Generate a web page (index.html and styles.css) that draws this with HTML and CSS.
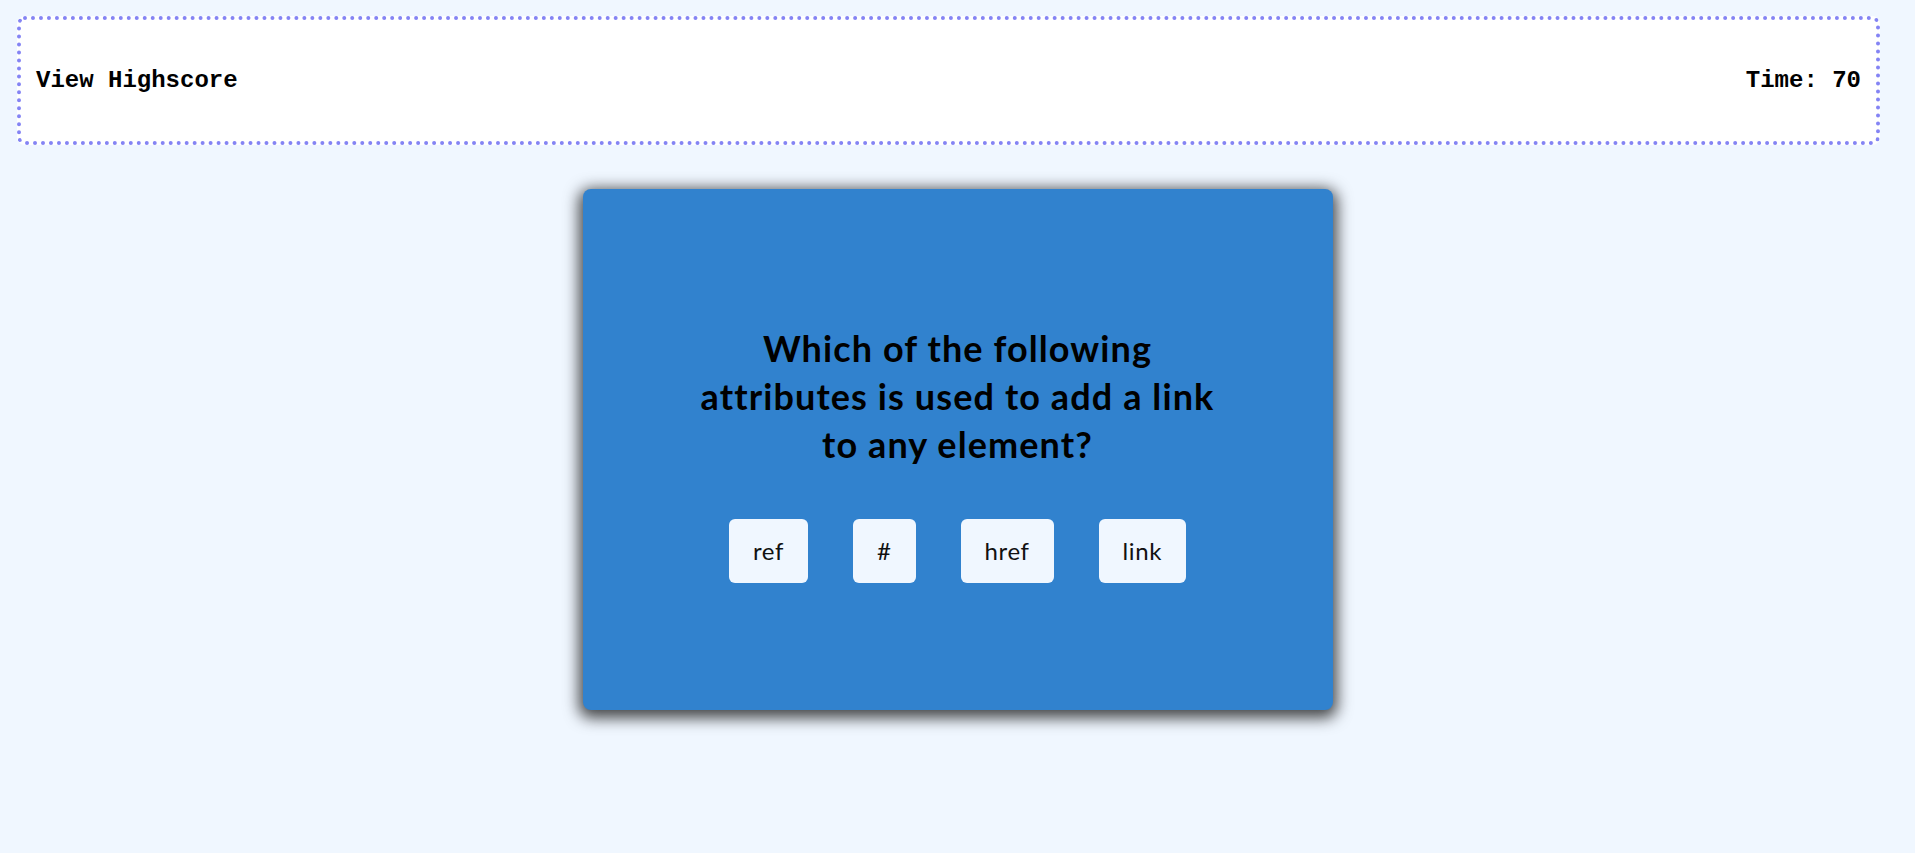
FILE: index.html
```html
<!DOCTYPE html>
<html lang="en">
<head>
<meta charset="utf-8">
<title>Code Quiz</title>
<link rel="stylesheet" href="styles.css">
</head>
<body>
<header class="topbar">
  <span class="highscore-link">View Highscore</span>
  <span class="timer">Time: 70</span>
</header>
<main class="quiz-card">
  <h2 class="question">Which of the following attributes is used to add a link to any element?</h2>
  <div class="choices">
    <button class="choice">ref</button>
    <button class="choice">#</button>
    <button class="choice">href</button>
    <button class="choice">link</button>
  </div>
</main>
</body>
</html>
```
FILE: styles.css
```css
html, body {
  margin: 0;
  padding: 0;
}
body {
  background: #f0f7ff;
  min-height: 853px;
  padding-top: 16px;
  box-sizing: border-box;
}
.topbar {
  box-sizing: border-box;
  width: 1863px;
  height: 129px;
  margin-left: 17px;
  background: #ffffff;
  border: 4px dotted #8484f4;
  border-radius: 8px;
  padding: 0 15px;
  display: flex;
  justify-content: space-between;
  align-items: center;
  font-family: "Liberation Mono", "Courier New", monospace;
  font-weight: bold;
  font-size: 24px;
  color: #000;
}
.quiz-card {
  box-sizing: border-box;
  width: 750px;
  height: 521px;
  margin: 44px auto 0;
  padding-top: 135px;
  background: #3182ce;
  border-radius: 8px;
  box-shadow: 0 4px 15px 4px rgba(0, 0, 0, 0.72);
  font-family: Lato, "Open Sans", sans-serif;
}
.question {
  width: 540px;
  margin: 0 auto;
  text-align: center;
  font-size: 36px;
  line-height: 48px;
  letter-spacing: 1.1px;
  font-weight: bold;
  color: #000;
}
.choices {
  display: flex;
  justify-content: center;
  gap: 45px;
  margin-top: 51px;
}
.choice {
  font-family: Lato, "Open Sans", sans-serif;
  font-size: 24px;
  line-height: 32px;
  letter-spacing: 0.6px;
  padding: 16px 24px;
  border: none;
  border-radius: 6px;
  background: #f0f7ff;
  color: #111;
}
```
